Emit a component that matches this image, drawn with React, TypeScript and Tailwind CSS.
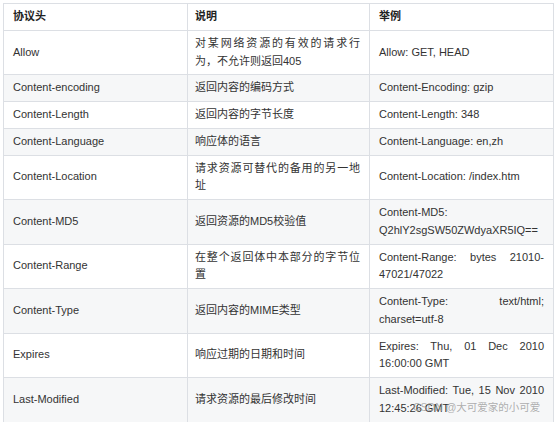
const rows: { name: string; desc: string[]; example: string[]; justifyFirst?: boolean }[] = [
  { name: "Allow", desc: ["对某网络资源的有效的请求行", "为，不允许则返回405"], example: ["Allow: GET, HEAD"] },
  { name: "Content-encoding", desc: ["返回内容的编码方式"], example: ["Content-Encoding: gzip"] },
  { name: "Content-Length", desc: ["返回内容的字节长度"], example: ["Content-Length: 348"] },
  { name: "Content-Language", desc: ["响应体的语言"], example: ["Content-Language: en,zh"] },
  { name: "Content-Location", desc: ["请求资源可替代的备用的另一地", "址"], example: ["Content-Location: /index.htm"] },
  {
    name: "Content-MD5",
    desc: ["返回资源的MD5校验值"],
    example: ["Content-MD5:", "Q2hlY2sgSW50ZWdyaXR5IQ=="],
    justifyFirst: false
  },
  { name: "Content-Range", desc: ["在整个返回体中本部分的字节位", "置"], example: ["Content-Range: bytes 21010-", "47021/47022"] },
  { name: "Content-Type", desc: ["返回内容的MIME类型"], example: ["Content-Type: text/html;", "charset=utf-8"] },
  { name: "Expires", desc: ["响应过期的日期和时间"], example: ["Expires: Thu, 01 Dec 2010", "16:00:00 GMT"] },
  { name: "Last-Modified", desc: ["请求资源的最后修改时间"], example: ["Last-Modified: Tue, 15 Nov 2010", "12:45:26 GMT"] }
];

function Lines({ lines, justify = true }: { lines: string[]; justify?: boolean }) {
  return (
    <>
      {lines.map((line, i) => (
        <span
          key={i}
          className={
            lines.length > 1 && i === 0 && justify
              ? "block text-justify [text-align-last:justify]"
              : "block"
          }
        >
          {line}
        </span>
      ))}
    </>
  );
}

export default function App() {
  return (
    <div className="relative h-[422px] w-[554px] overflow-hidden bg-white font-['Liberation_Sans','Noto_Sans_CJK_SC',sans-serif] text-[11px] leading-[17.75px] text-[#333]">
      <table className="ml-[3px] mt-[3px] w-[550px] table-fixed border-collapse border border-[#d6d9de]">
        <colgroup>
          <col className="w-[184px]" />
          <col className="w-[182px]" />
          <col className="w-[184px]" />
        </colgroup>
        <thead>
          <tr className="bg-white">
            <th className="border border-[#dcdfe4] px-[9px] py-[4px] text-left font-bold text-[#222]">协议头</th>
            <th className="border border-[#dcdfe4] py-[4px] pl-[7px] pr-[9px] text-left font-bold text-[#222]">说明</th>
            <th className="border border-[#dcdfe4] px-[9px] py-[4px] text-left font-bold text-[#222]">举例</th>
          </tr>
        </thead>
        <tbody>
          {rows.map((row, i) => (
            <tr key={row.name} className={i % 2 === 1 ? "bg-[#f6f7f8]" : "bg-white"}>
              <td className="border border-[#dcdfe4] px-[9px] py-[4px] align-middle">{row.name}</td>
              <td className="border border-[#dcdfe4] py-[4px] pl-[7px] pr-[9px] align-middle">
                <Lines lines={row.desc} />
              </td>
              <td className="border border-[#dcdfe4] px-[9px] py-[4px] align-middle">
                <Lines lines={row.example} justify={row.justifyFirst !== false} />
              </td>
            </tr>
          ))}
        </tbody>
      </table>
      <span className="absolute left-[413px] top-[399px] whitespace-nowrap text-[10.5px] leading-[16px] text-[#9a9a9a]/80">
        CSDN @大可爱家的小可爱
      </span>
    </div>
  );
}
